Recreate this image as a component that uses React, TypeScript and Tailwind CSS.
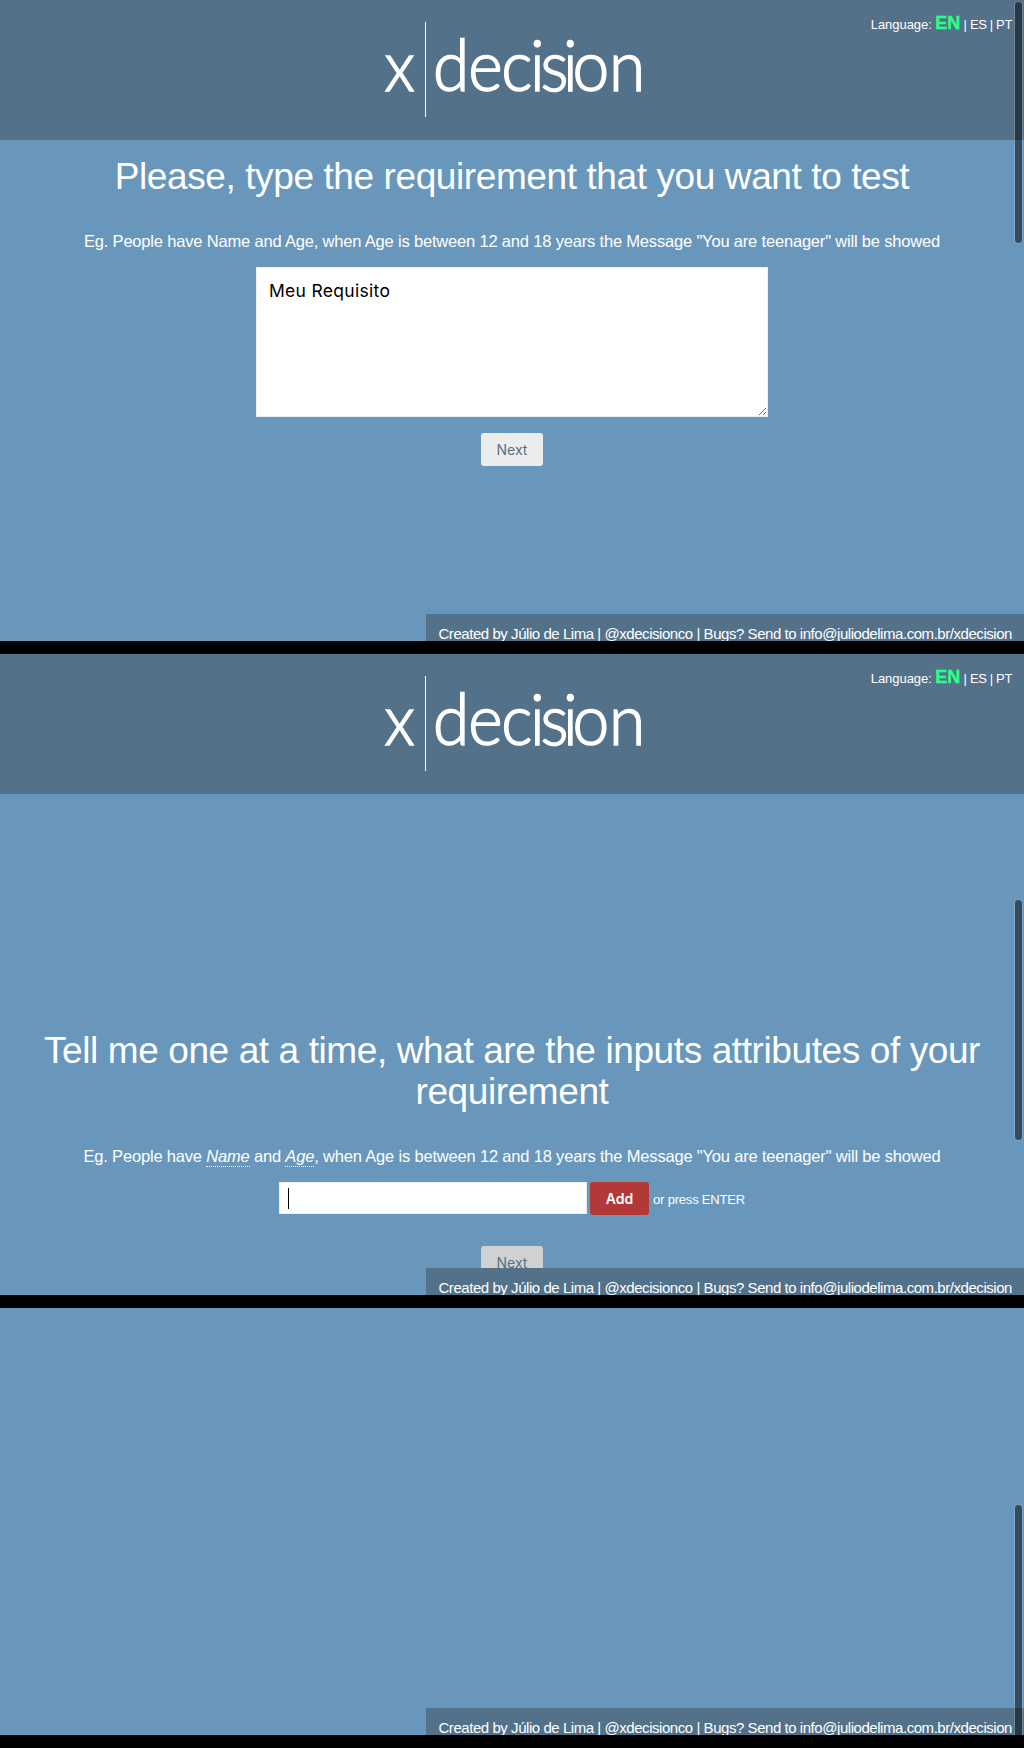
import React from "react";

function Logo() {
  return (
    <svg width="290" height="140" viewBox="367 0 290 140" className="block" fill="#fff" stroke="#fff" strokeWidth="1.6" fontFamily="Lato" fontWeight="300" fontSize="70">
      <text transform="translate(384.5 91) scale(0.92 1)">x</text>
      <rect x="425" y="22" width="1" height="95" stroke="none" />
      <text transform="translate(433 91) scale(0.94 1)" x="0 37.6 72.6 103.2 114.5 138.2 148.4 187.2">decision</text>
    </svg>
  );
}

function Header() {
  return (
    <header className="relative flex h-[140px] w-full justify-center bg-[#537189]">
      <Logo />
      <nav className="absolute top-[12px] right-[12px] flex items-baseline text-[13px] leading-[22px] tracking-[-0.35px] whitespace-pre">
        <span className="tracking-[-0.05px]">Language: </span>
        <b className="text-[18px] tracking-[0px] text-[#2bff88] [-webkit-text-stroke:0.4px_#2bff88]">EN</b>
        <span> | ES | PT</span>
      </nav>
    </header>
  );
}

function Footer() {
  return (
    <footer className="absolute right-0 bottom-0 h-[27px] w-[598px] overflow-hidden bg-[#537189] pt-[10px] pr-3 text-right text-[15px] leading-[20px] tracking-[-0.45px] whitespace-nowrap">
      Created by Júlio de Lima | @xdecisionco | Bugs? Send to info@juliodelima.com.br/xdecision
    </footer>
  );
}

function Scrollbar({ className }: { className: string }) {
  return <div className={"absolute right-[2px] w-[7px] bg-black/50 ring-1 ring-white/15 " + className} />;
}

export default function App() {
  return (
    <main className="flex w-[1024px] flex-col gap-[13px] bg-black pb-[13px] font-['Liberation_Sans',sans-serif] text-white">
      <section className="relative flex h-[641px] flex-col items-center overflow-hidden bg-[#6997bc]">
        <Header />
        <h1 className="mt-[16px] text-[37px] leading-[41px] tracking-[-0.4px] whitespace-nowrap">
          Please, type the requirement that you want to test
        </h1>
        <p className="mt-[34px] text-[16.5px] leading-[20px] tracking-[-0.18px] whitespace-nowrap">
          Eg. People have Name and Age, when Age is between 12 and 18 years the Message "You are teenager" will be showed
        </p>
        <textarea
          defaultValue="Meu Requisito"
          className="mt-[16px] block h-[150px] w-[512px] shrink-0 resize border border-[#eee] bg-white px-3 py-[11px] font-['Inter',sans-serif] text-[17.5px] leading-[24px] tracking-[0.3px] text-black outline-none"
        />
        <button className="mt-4 h-[33px] w-[62px] rounded-[3px] bg-[#ececec] font-['Inter',sans-serif] text-[14px] text-[#537189]">Next</button>
        <Footer />
        <Scrollbar className="top-[2px] h-[241px] rounded-full" />
      </section>

      <section className="relative flex h-[641px] flex-col items-center overflow-hidden bg-[#6997bc]">
        <Header />
        <h1 className="mt-[236px] text-center text-[37px] leading-[41px] tracking-[-0.4px] whitespace-nowrap">
          Tell me one at a time, what are the inputs attributes of your
          <br />
          requirement
        </h1>
        <p className="mt-[34px] text-[16.5px] leading-[20px] tracking-[-0.18px] whitespace-nowrap">
          Eg. People have <i className="border-b border-dotted border-white pb-px">Name</i> and{" "}
          <i className="border-b border-dotted border-white pb-px">Age</i>, when Age is between 12 and 18 years the Message "You are teenager" will be showed
        </p>
        <div className="mt-[16px] flex items-start">
          <div className="h-[32px] w-[308px] border border-[#eee] bg-white pt-[5px] pl-2">
            <div className="h-[21px] w-px bg-black" />
          </div>
          <button className="ml-[3px] h-[33px] w-[59px] rounded-[3px] bg-[#b33838] font-['Inter',sans-serif] text-[14px] font-semibold">Add</button>
          <span className="ml-[4px] pt-[8px] text-[13px] leading-[20px] tracking-[-0.2px] whitespace-nowrap">or press ENTER</span>
        </div>
        <button className="mt-[31px] h-[33px] w-[62px] shrink-0 rounded-[3px] bg-[#d1d1d1] font-['Inter',sans-serif] text-[14px] text-[#537189]">Next</button>
        <Footer />
        <Scrollbar className="top-[246px] h-[240px] rounded-full" />
      </section>

      <section className="relative h-[427px] overflow-hidden bg-[#6997bc]">
        <Footer />
        <Scrollbar className="top-[197px] h-[230px] rounded-t-full" />
      </section>
    </main>
  );
}
